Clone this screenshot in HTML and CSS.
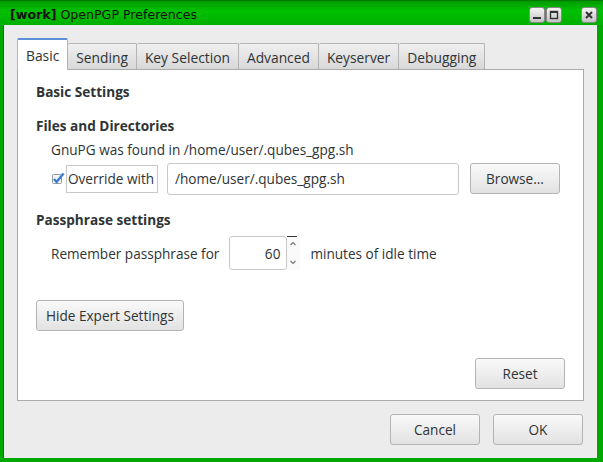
FILE: index.html
```html
<!DOCTYPE html>
<html>
<head>
<meta charset="utf-8">
<link rel="stylesheet" href="styles.css">
</head>
<body>
<div class="window">
  <div class="titlebar">
    <div class="title"><b>[work]</b> OpenPGP Preferences</div>
    <div class="wbtns">
      <span class="wbtn"><svg width="10" height="10" viewBox="0 0 10 10"><rect x="1" y="7" width="8" height="2" fill="#333"/></svg></span>
      <span class="wbtn"><svg width="10" height="10" viewBox="0 0 10 10"><rect x="1.5" y="1.5" width="7" height="7" fill="none" stroke="#333" stroke-width="1.4"/><rect x="1" y="1" width="8" height="2" fill="#333"/></svg></span>
      <span class="wbtn close"><svg width="10" height="10" viewBox="0 0 10 10"><path d="M2 2L8 8M8 2L2 8" stroke="#333" stroke-width="2"/></svg></span>
    </div>
  </div>
  <div class="client">
    <div class="tabs">
      <div class="tab active">Basic</div>
      <div class="tab">Sending</div>
      <div class="tab">Key Selection</div>
      <div class="tab">Advanced</div>
      <div class="tab">Keyserver</div>
      <div class="tab">Debugging</div>
    </div>
    <div class="panel">
      <div class="heading">Basic Settings</div>
      <div class="heading h2">Files and Directories</div>
      <div class="line found">GnuPG was found in /home/user/.qubes_gpg.sh</div>
      <div class="row override">
        <span class="check"><svg width="14" height="13" viewBox="0 0 14 13"><rect x="0.5" y="2.5" width="9" height="9" rx="1" fill="#f4f4f4" stroke="#9a9a9a"/><path d="M2 7L4.6 10L11.5 1.5" fill="none" stroke="#3b7bd0" stroke-width="2.4"/></svg></span>
        <span class="cblabel">Override with</span>
        <span class="textinput">/home/user/.qubes_gpg.sh</span>
        <span class="btn browse">Browse...</span>
      </div>
      <div class="heading h3">Passphrase settings</div>
      <div class="row pass">
        <span>Remember passphrase for</span>
        <span class="spin"><span class="spinval">60</span><span class="arrows"><svg width="13" height="34" viewBox="0 0 13 34"><path d="M0 0.5H10" stroke="#333" stroke-width="1"/><path d="M3.5 9L6 6.5L8.5 9" fill="none" stroke="#777" stroke-width="1.2"/><path d="M3.5 25L6 27.5L8.5 25" fill="none" stroke="#777" stroke-width="1.2"/></svg></span></span>
        <span class="after">minutes of idle time</span>
      </div>
      <div class="expert"><span class="btn">Hide Expert Settings</span></div>
      <div class="resetrow"><span class="btn reset">Reset</span></div>
    </div>
    <div class="footer">
      <span class="btn">Cancel</span>
      <span class="btn">OK</span>
    </div>
  </div>
</div>
</body>
</html>
```
FILE: styles.css
```css
* { box-sizing: border-box; }
html, body { margin: 0; padding: 0; }
body {
  width: 603px;
  height: 462px;
  overflow: hidden;
  font-family: "Open Sans", sans-serif;
  font-size: 13.6px;
  color: #2e3436;
}
.window {
  width: 603px;
  height: 462px;
  display: flex;
  flex-direction: column;
  background: #00a800;
  padding: 0 6px 4px 3px;
}
.titlebar {
  height: 25px;
  margin: 0 -6px 0 -3px;
  padding: 0 6px 0 10px;
  background: linear-gradient(#009a00, #00c000 40%, #00b000);
  border-top: 1px solid #007a00;
  display: flex;
  align-items: center;
  justify-content: space-between;
  font-family: "DejaVu Sans", sans-serif;
  font-size: 12.6px;
  color: #111;
}
.title { padding-top: 2px; }
.wbtns { display: flex; align-items: center; padding-top: 3px; }
.wbtn {
  width: 16px;
  height: 16px;
  border: 1px solid #8a8a8a;
  border-radius: 3px;
  background: linear-gradient(#f4f4f4, #c4c4c4);
  display: flex;
  align-items: center;
  justify-content: center;
  margin-left: 1px;
}
.wbtn.close { margin-left: 19px; }
.client {
  flex: 1;
  background: #ececec;
  border-left: 1px solid #008000;
  padding: 13px 13px 0 13px;
  display: flex;
  flex-direction: column;
}
.tabs {
  display: flex;
  align-items: flex-end;
  height: 31px;
  position: relative;
  z-index: 1;
}
.tab {
  height: 26px;
  padding: 0 8px;
  border: 1px solid #b4b4b4;
  border-left: none;
  border-bottom: none;
  border-radius: 2px 2px 0 0;
  background: linear-gradient(#f0f0f0, #d8d8d8);
  display: flex;
  align-items: center;
  padding-top: 1px;
  font-size: 13.8px;
}
.tab.active {
  background: #fff;
  border: 1px solid #b4b4b4;
  border-top: 2px solid #5b8fd6;
  border-bottom: none;
  padding: 0 8px;
  margin-bottom: -1px;
  height: 32px;
}
.panel {
  width: 567px;
  height: 332px;
  background: #fff;
  border: 1px solid #aaa;
  padding: 12px 18px 0 18px;
  display: flex;
  flex-direction: column;
}
.heading { font-weight: bold; height: 20px; line-height: 20px; }
.h2 { margin-top: 14px; }
.line { line-height: 20px; }
.found { margin-top: 4px; padding-left: 15px; }
.row { display: flex; align-items: center; }
.override { margin-top: 3px; padding-left: 15px; height: 31px; }
.check { display: inline-flex; width: 15px; height: 14px; align-items: center; margin-left: 1px; margin-right: -1px; position: relative; z-index: 1; }
.cblabel {
  border: 1px solid #c8c8c8;
  height: 28px;
  padding: 0 1px;
  display: flex;
  align-items: center;
  width: 92px;
}
.textinput {
  margin-left: 9px;
  width: 292px;
  height: 32px;
  border: 1px solid #c8c8c8;
  border-radius: 3px;
  display: flex;
  align-items: center;
  padding-left: 7px;
}
.btn {
  display: inline-flex;
  align-items: center;
  justify-content: center;
  height: 31px;
  min-width: 90px;
  padding: 0 5px;
  border: 1px solid #b4b4b4;
  border-radius: 3px;
  background: linear-gradient(#f9f9f9, #e2e2e2);
}
.browse { margin-left: 11px; }
.h3 { margin-top: 16px; }
.pass { margin-top: 6px; padding-left: 15px; height: 34px; }
.spin {
  margin-left: 10px;
  display: flex;
  height: 34px;
}
.spinval {
  width: 58px;
  border: 1px solid #c8c8c8;
  border-radius: 3px;
  display: flex;
  align-items: center;
  justify-content: flex-end;
  padding-right: 6px;
}
.arrows { width: 13px; display: flex; background: #fafafa; }
.after { margin-left: 10px; }
.expert { margin-top: 30px; }
.expert .btn { padding: 0 9px; }
.resetrow { margin-top: 27px; display: flex; justify-content: flex-end; }
.footer {
  display: flex;
  justify-content: flex-end;
  gap: 13px;
  margin-top: 13px;
  padding-right: 1px;
}
```
